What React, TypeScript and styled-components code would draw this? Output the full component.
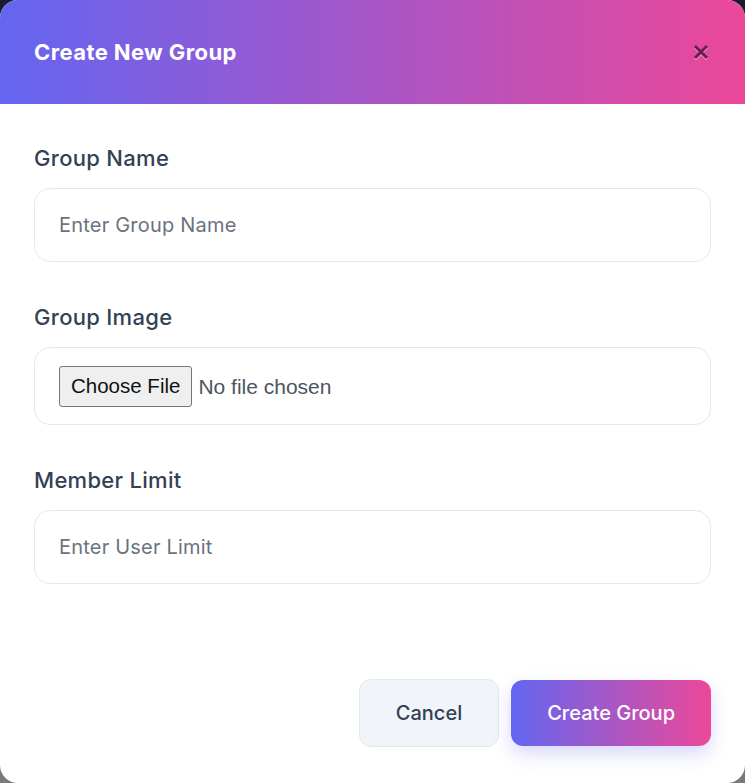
import * as React from 'react';
import styled, { createGlobalStyle } from 'styled-components';

const GlobalStyle = createGlobalStyle`
  html, body {
    margin: 0;
    padding: 0;
  }
  body {
    background: linear-gradient(180deg, #1b1d2e 0%, #4a4a55 60%, #7a7a7a 100%);
    font-family: Inter, "Open Sans", "Liberation Sans", sans-serif;
  }
`;

const Modal = styled.div`
  width: 745px;
  height: 783px;
  display: flex;
  flex-direction: column;
  background: #ffffff;
  border-radius: 18px;
  overflow: hidden;
`;

const Header = styled.div`
  height: 104px;
  flex-shrink: 0;
  display: flex;
  align-items: center;
  justify-content: space-between;
  padding: 0 34px;
  background: linear-gradient(90deg, #6366f1 0%, #a855c7 50%, #ec4899 100%);
`;

const Title = styled.h2`
  margin: 0;
  font-size: 22px;
  font-weight: 700;
  color: #ffffff;
  letter-spacing: 0.4px;
`;

const CloseButton = styled.button`
  width: 24px;
  height: 24px;
  padding: 0;
  border: 0;
  background: transparent;
  display: flex;
  align-items: center;
  justify-content: center;
  cursor: pointer;
  margin-right: -2px;
`;

const Body = styled.div`
  display: flex;
  flex-direction: column;
  gap: 40px;
  padding: 39px 34px 0;
`;

const Field = styled.div`
  display: flex;
  flex-direction: column;
`;

const Label = styled.label`
  font-size: 22px;
  line-height: 30px;
  font-weight: 450;
  color: #334155;
  letter-spacing: 0.3px;
  margin-bottom: 15px;
`;

const TextInput = styled.input`
  box-sizing: border-box;
  height: 74px;
  padding: 0 24px;
  border: 1px solid #e2e8f0;
  border-radius: 16px;
  font-family: inherit;
  font-size: 20px;
  letter-spacing: 0.2px;
  color: #1f2937;
  outline: none;
  &::placeholder {
    color: #6b7280;
  }
`;

const FileBox = styled.div`
  box-sizing: border-box;
  height: 78px;
  display: flex;
  align-items: center;
  padding: 0 24px;
  border: 1px solid #e2e8f0;
  border-radius: 16px;
`;

const FileInput = styled.input`
  font-family: "Liberation Sans", Arial, sans-serif;
  font-size: 21px;
  color: #4b5563;
  &::file-selector-button {
    font-family: "Liberation Sans", Arial, sans-serif;
    font-size: 20.5px;
    color: #111111;
    height: 41px;
    padding: 0 11px;
    margin-right: 6px;
    background: #efefef;
    border: 1px solid #767676;
    border-radius: 3px;
  }
`;

const Footer = styled.div`
  margin-top: auto;
  display: flex;
  justify-content: flex-end;
  align-items: center;
  gap: 12px;
  padding: 0 34px 36px;
`;

const Button = styled.button<{ $primary?: boolean }>`
  box-sizing: border-box;
  height: ${(p) => (p.$primary ? '66px' : '68px')};
  padding: 0 36px;
  border-radius: 12px;
  font-family: inherit;
  font-size: 20px;
  font-weight: 500;
  cursor: pointer;
  border: ${(p) => (p.$primary ? '0' : '1px solid #e2e8f0')};
  color: ${(p) => (p.$primary ? '#ffffff' : '#334155')};
  background: ${(p) =>
    p.$primary ? 'linear-gradient(90deg, #6366f1 0%, #ec4899 100%)' : '#f1f5f9'};
  box-shadow: ${(p) =>
    p.$primary ? '0 8px 18px rgba(99, 102, 241, 0.25)' : 'none'};
`;

const App: React.FC = () => (
  <>
    <GlobalStyle />
    <Modal>
      <Header>
        <Title>Create New Group</Title>
        <CloseButton aria-label='Close'>
          <svg width='16' height='16' viewBox='0 0 16 16'>
            <path
              d='M3 4 L13 14 M13 4 L3 14'
              stroke='#f9a8d4'
              strokeWidth='3'
              strokeLinecap='square'
            />
            <path
              d='M3 3 L13 13 M13 3 L3 13'
              stroke='#6b1d4f'
              strokeWidth='3'
              strokeLinecap='square'
            />
          </svg>
        </CloseButton>
      </Header>
      <Body>
        <Field>
          <Label>Group Name</Label>
          <TextInput type='text' placeholder='Enter Group Name' />
        </Field>
        <Field>
          <Label>Group Image</Label>
          <FileBox>
            <FileInput type='file' />
          </FileBox>
        </Field>
        <Field>
          <Label>Member Limit</Label>
          <TextInput type='number' placeholder='Enter User Limit' />
        </Field>
      </Body>
      <Footer>
        <Button>Cancel</Button>
        <Button $primary>Create Group</Button>
      </Footer>
    </Modal>
  </>
);

export default App;
